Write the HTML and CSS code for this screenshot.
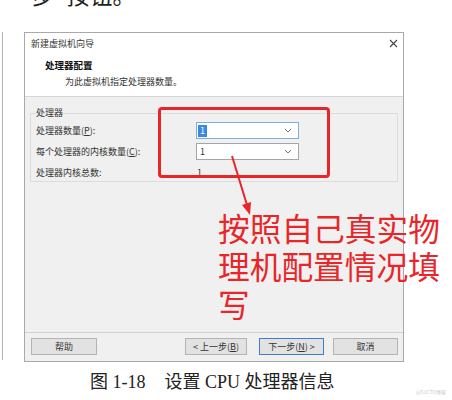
FILE: index.html
```html
<!DOCTYPE html>
<html lang="zh-CN">
<head>
    <meta charset="UTF-8">
    <meta name="viewport" content="width=device-width, initial-scale=1.0">
    <title>设置 CPU 处理器信息</title>
    <link rel="stylesheet" href="styles.css">
</head>
<body>
    <div class="page">
        <div class="lead"><span>步&nbsp;&nbsp;按钮。</span></div>

        <div class="figure">
            <div class="edge"></div>
            <div class="dialog">
                <div class="titlebar">
                    <span>新建虚拟机向导</span>
                    <svg class="close" width="9" height="9" viewBox="0 0 9 9">
                        <path d="M1 1 L8 8 M8 1 L1 8" stroke="#444" stroke-width="1.1" fill="none"/>
                    </svg>
                </div>
                <div class="header">
                    <div class="heading">处理器配置</div>
                    <div class="subheading">为此虚拟机指定处理器数量。</div>
                </div>
                <div class="body">
                    <fieldset class="group">
                        <legend>处理器</legend>
                        <div class="rows">
                            <div class="label">处理器数量(<u>P</u>):</div>
                            <div class="combo focused">
                                <span class="value selected">1</span>
                                <svg class="chevron" width="8" height="5" viewBox="0 0 8 5"><path d="M1 1 L4 4 L7 1" stroke="#777" fill="none"/></svg>
                            </div>
                            <div class="label">每个处理器的内核数量(<u>C</u>):</div>
                            <div class="combo">
                                <span class="value">1</span>
                                <svg class="chevron" width="8" height="5" viewBox="0 0 8 5"><path d="M1 1 L4 4 L7 1" stroke="#777" fill="none"/></svg>
                            </div>
                            <div class="label">处理器内核总数:</div>
                            <div class="plain">1</div>
                        </div>
                    </fieldset>
                </div>
                <div class="footer">
                    <button class="btn help">帮助</button>
                    <div class="nav">
                        <button class="btn back">&lt; 上一步(<u>B</u>)</button>
                        <button class="btn next">下一步(<u>N</u>) &gt;</button>
                        <button class="btn cancel">取消</button>
                    </div>
                </div>
            </div>
        </div>

        <div class="caption">图 1-18<span class="gap"></span>设置 CPU 处理器信息</div>

        <!-- annotations drawn over the screenshot -->
        <div class="mark-box"></div>
        <svg class="mark-arrow" width="452" height="400" viewBox="0 0 452 400">
            <line x1="232" y1="156" x2="247" y2="205" stroke="#e8262a" stroke-width="2"/>
            <polygon points="250,215 251,202 242,205" fill="#e8262a"/>
        </svg>
        <div class="mark-text">按照自己真实物<br>理机配置情况填<br>写</div>
        <div class="watermark">@51CTO博客</div>
    </div>
</body>
</html>
```

FILE: styles.css
```css
body {
    margin: 0;
    background: #fff;
    font-family: "Noto Sans CJK SC", "Noto Sans", sans-serif;
}

.page {
    position: relative;
    width: 452px;
    height: 400px;
    overflow: hidden;
}

.lead {
    height: 32px;
    overflow: hidden;
    padding-left: 32px;
    font-family: "Liberation Serif", "Noto Sans CJK SC", serif;
    font-size: 23px;
    line-height: 23px;
    color: #222;
}

.lead span {
    display: block;
    margin-top: -15px;
}

.figure {
    display: flex;
    height: 330px;
}

.edge {
    margin-left: 2px;
    width: 1px;
    height: 328px;
    background: #b4b4b4;
}

.dialog {
    box-sizing: border-box;
    margin-left: 21px;
    width: 380px;
    height: 330px;
    border: 1px solid #a9a9a9;
    display: flex;
    flex-direction: column;
    font-size: 9px;
    color: #333;
}

.titlebar {
    height: 21px;
    padding: 0 5px 0 6px;
    display: flex;
    justify-content: space-between;
    align-items: center;
    background: #fff;
}

.header {
    height: 43px;
    background: #fff;
    border-bottom: 1px solid #d6d6d6;
    padding-top: 5px;
    box-sizing: border-box;
}

.heading {
    padding-left: 20px;
    font-weight: bold;
    font-size: 9.5px;
    line-height: 12px;
    color: #111;
}

.subheading {
    padding-left: 40px;
    margin-top: 5px;
    line-height: 12px;
}

.body {
    flex: 1;
    background: #f0f0f0;
    padding: 11px 5px 0 5px;
}

.group {
    margin: 0;
    height: 74px;
    box-sizing: border-box;
    border: 1px solid #dcdcdc;
    padding: 0 0 0 5px;
}

.group legend {
    padding: 0;
    margin-left: 0;
    line-height: 10px;
}

.rows {
    display: grid;
    grid-template-columns: 160px 103px;
    grid-auto-rows: 17px;
    row-gap: 4px;
    align-items: center;
    margin-top: 4px;
}

.label u {
    text-decoration: underline;
}

.combo {
    box-sizing: border-box;
    height: 17px;
    border: 1px solid #a5a5a5;
    background: #fff;
    display: flex;
    align-items: center;
    justify-content: space-between;
    padding: 0 6px 0 1px;
}

.combo.focused {
    border-color: #7eaee0;
}

.value {
    padding: 0 2px;
    line-height: 12px;
}

.value.selected {
    background: #3a88e0;
    color: #fff;
}

.plain {
    padding-left: 1px;
}

.footer {
    height: 29px;
    border-top: 1px solid #d0d0d0;
    background: #f0f0f0;
    box-sizing: border-box;
    padding: 5px 5px 0 6px;
    display: flex;
    justify-content: space-between;
    align-items: flex-start;
}

.nav {
    display: flex;
    gap: 9px;
}

.btn {
    height: 17px;
    padding: 0;
    border: 1px solid #b4b4b4;
    background: #e2e2e2;
    font-family: "Noto Sans CJK SC", sans-serif;
    font-size: 9px;
    color: #333;
    line-height: 15px;
}

.btn.help {
    width: 66px;
}

.btn.back {
    width: 62px;
    margin-right: 3px;
}

.btn.next {
    width: 65px;
    border-color: #3c7fd0;
}

.btn.cancel {
    width: 65px;
}

.caption {
    padding: 10px 0 0 90px;
    font-family: "Liberation Serif", "Noto Sans CJK SC", serif;
    font-size: 18px;
    line-height: 20px;
    color: #222;
}

.caption .gap {
    display: inline-block;
    width: 19px;
}

.mark-box {
    position: absolute;
    left: 158px;
    top: 107px;
    width: 172px;
    height: 71px;
    box-sizing: border-box;
    border: 3px solid #e8262a;
    border-radius: 4px;
}

.mark-arrow {
    position: absolute;
    left: 0;
    top: 0;
    pointer-events: none;
}

.mark-text {
    position: absolute;
    left: 218px;
    top: 208px;
    font-size: 31.7px;
    line-height: 38px;
    color: #e8262a;
}

.watermark {
    position: absolute;
    right: 6px;
    top: 388px;
    font-size: 5px;
    color: #c8c8c8;
}
```
